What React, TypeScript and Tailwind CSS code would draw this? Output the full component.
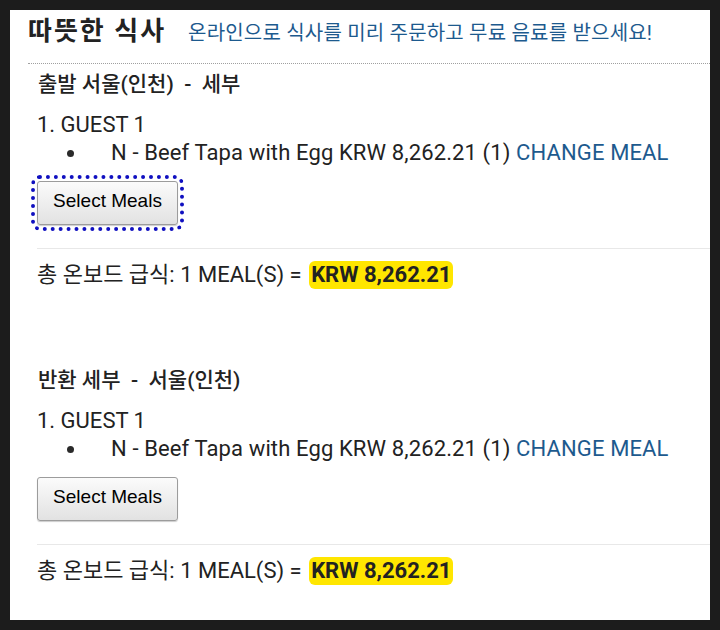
import React from 'react';

const FONT = "Roboto, 'Noto Sans CJK KR', sans-serif";

interface Leg {
  from: string;
  to: string;
  focused?: boolean;
}

function MealLeg({ from, to, focused }: Leg) {
  return (
    <section>
      <h3 className="pl-[28px] text-[21px] font-medium text-[#222] leading-[24px]">
        {from}&nbsp;&nbsp;-&nbsp;&nbsp;{to}
      </h3>
      <div className="pl-[27px] mt-[15px] text-[22px] text-[#222] leading-[28px]">
        <div>1. GUEST 1</div>
        <ul className="pl-[30px]">
          <li className="flex items-center">
            <span className="w-[7px] h-[7px] rounded-full bg-[#2a2a2a] mr-[37px] shrink-0" />
            <span className="whitespace-nowrap tracking-[0.12px]">
              N - Beef Tapa with Egg KRW 8,262.21 (1){' '}
              <a className="text-[#1d5a8e]">CHANGE MEAL</a>
            </span>
          </li>
        </ul>
        <div className="mt-[14px] h-[44px]">
          <button
            className={
              'h-[44px] w-[141px] pb-[4px] rounded-[3px] border border-[#9c9c9c] bg-gradient-to-b from-[#fbfbfb] to-[#e2e2e2] text-[19px] text-black shadow-[0_1px_1px_rgba(0,0,0,0.2)] ' +
              (focused ? 'outline-[4px] outline-dotted outline-[#1010c0] outline-offset-[2px]' : '')
            }
            style={{ fontFamily: "'Liberation Sans', Arial, sans-serif" }}
          >
            Select Meals
          </button>
        </div>
      </div>
      <div className="ml-[27px] mt-[23px] border-t border-[#e8e8e8]" />
      <div className="pl-[27px] pt-[12px] flex items-center text-[22px] text-[#222] leading-[28px]">
        <span>총 온보드 급식: 1 MEAL(S) =&nbsp;</span>
        <span className="ml-[2px] rounded-[6px] bg-[#ffe600] px-[2px] font-bold text-[#222]">KRW 8,262.21</span>
      </div>
    </section>
  );
}

export default function App() {
  return (
    <div className="w-[720px] h-[630px] bg-[#1c1c1c] p-[10px]" style={{ fontFamily: FONT }}>
      <div className="h-full bg-white">
        <div className="flex items-baseline pl-[18px] pt-[4px] pb-[15px]">
          <h1 className="text-[26px] font-bold text-[#222] leading-[34px] tracking-[2px]">따뜻한 식사</h1>
          <p className="ml-[22px] text-[20px] text-[#1d5a8e] leading-[24px] tracking-[0.2px]">
            온라인으로 식사를 미리 주문하고 무료 음료를 받으세요!
          </p>
        </div>
        <div className="ml-[18px] border-t border-dotted border-[#a0a0a0]" />
        <div className="pt-[8px]">
          <MealLeg from="출발 서울(인천)" to="세부" focused />
        </div>
        <div className="pt-[79px]">
          <MealLeg from="반환 세부" to="서울(인천)" />
        </div>
      </div>
    </div>
  );
}
